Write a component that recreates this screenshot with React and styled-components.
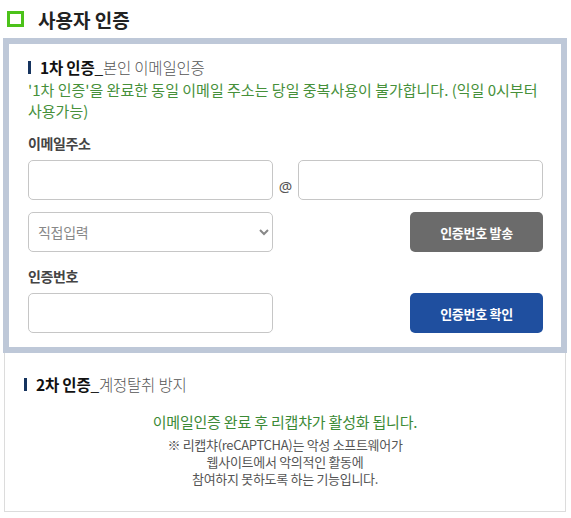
import React from 'react';
import styled, { createGlobalStyle } from 'styled-components';

const GlobalStyle = createGlobalStyle`
    body {
        margin: 0;
        background: #ffffff;
        font-family: "Noto Sans CJK KR", "Noto Sans", sans-serif;
        color: #333;
    }
`;

const App = () => {
    return(
        <Page>
            <GlobalStyle />
            <TitleRow>
                <TitleMark />
                <Title>사용자 인증</Title>
            </TitleRow>
            <Wrapper>
                <FirstBox>
                    <Heading>
                        <Strong>1차 인증</Strong>_<Sub>본인 이메일인증</Sub>
                    </Heading>
                    <Notice>'1차 인증'을 완료한 동일 이메일 주소는 당일 중복사용이 불가합니다. (익일 0시부터 사용가능)</Notice>
                    <Label>이메일주소</Label>
                    <Row>
                        <Input type='text' />
                        <At>@</At>
                        <Input type='text' />
                    </Row>
                    <Row $spaced>
                        <SelectBox>
                            <option>직접입력</option>
                        </SelectBox>
                        <Button $color='#6b6b6b'>인증번호 발송</Button>
                    </Row>
                    <Label $top={14}>인증번호</Label>
                    <Row $spaced>
                        <Input type='text' />
                        <Button $color='#1f4f9f'>인증번호 확인</Button>
                    </Row>
                </FirstBox>
                <SecondBox>
                    <Heading>
                        <Strong>2차 인증</Strong>_<Sub>계정탈취 방지</Sub>
                    </Heading>
                    <CenterNotice>이메일인증 완료 후 리캡챠가 활성화 됩니다.</CenterNotice>
                    <Help>
                        <HelpLine>※ 리캡챠(reCAPTCHA)는 악성 소프트웨어가</HelpLine>
                        <HelpLine>웹사이트에서 악의적인 활동에</HelpLine>
                        <HelpLine>참여하지 못하도록 하는 기능입니다.</HelpLine>
                    </Help>
                </SecondBox>
            </Wrapper>
        </Page>
    );
};

const Page = styled.div`
    width: 571px;
`;
const TitleRow = styled.div`
    height: 38px;
    display: flex;
    align-items: center;
    padding-left: 7px;
    box-sizing: border-box;
`;
const TitleMark = styled.span`
    width: 17px;
    height: 16px;
    box-sizing: border-box;
    border: 3px solid #4cc21a;
`;
const Title = styled.h1`
    margin: 0 0 0 14px;
    font-size: 19px;
    font-weight: 700;
    color: #222;
    letter-spacing: 0;
`;
const Wrapper = styled.div`
    margin-left: 3px;
    width: 564px;
`;
const FirstBox = styled.div`
    border: 6px solid #bec8d8;
    padding: 12px 18px 14px 19px;
`;
const Heading = styled.h2`
    margin: 0;
    display: flex;
    align-items: center;
    font-size: 15.5px;
    line-height: 22px;
    font-weight: 400;
    color: #222;
    letter-spacing: -0.2px;
    &::before {
        content: '';
        width: 3px;
        height: 13px;
        background: #16345f;
        margin: 0 9px 0 0;
    }
`;
const Strong = styled.strong`
    font-weight: 700;
    color: #111;
`;
const Sub = styled.span`
    color: #555;
    font-weight: 300;
`;
const Notice = styled.p`
    margin: 1px 0 0;
    font-size: 15px;
    line-height: 21px;
    color: #46903a;
    letter-spacing: 0;
`;
const Label = styled.div`
    margin-top: ${(props) => props.$top || 12}px;
    font-size: 14px;
    line-height: 20px;
    font-weight: 700;
    color: #444;
    letter-spacing: -0.4px;
`;
const Row = styled.div`
    display: flex;
    align-items: center;
    justify-content: ${(props) => props.$spaced ? 'space-between' : 'flex-start'};
    margin-top: ${(props) => props.$spaced ? 12 : 8}px;
    ${Label} + & {
        margin-top: 7px;
    }
`;
const Input = styled.input`
    width: 245px;
    height: 40px;
    box-sizing: border-box;
    border: 1px solid #c6c6c6;
    border-radius: 5px;
    background: #fff;
    font-family: inherit;
    font-size: 14px;
`;
const At = styled.span`
    width: 25px;
    padding-top: 12px;
    text-align: center;
    font-family: "Noto Sans", sans-serif;
    font-size: 15px;
    color: #555;
`;
const SelectBox = styled.select`
    width: 245px;
    height: 40px;
    box-sizing: border-box;
    border: 1px solid #c6c6c6;
    border-radius: 5px;
    background: #fff;
    padding: 0 6px 0 5px;
    font-family: inherit;
    font-size: 14px;
    color: #888;
    letter-spacing: -0.3px;
`;
const Button = styled.button`
    width: 133px;
    height: 40px;
    border: none;
    border-radius: 5px;
    background: ${(props) => props.$color};
    color: #fff;
    font-family: inherit;
    font-size: 13px;
    font-weight: 700;
    letter-spacing: -0.3px;
`;
const SecondBox = styled.div`
    margin: 0 1px;
    border: 1px solid #dcdcdc;
    border-top: none;
    padding: 20px 19px 24px 19px;
    height: 159px;
    box-sizing: border-box;
`;
const CenterNotice = styled.p`
    margin: 16px 0 0;
    text-align: center;
    font-size: 15px;
    line-height: 22px;
    color: #3c8a36;
    letter-spacing: -0.2px;
`;
const Help = styled.div`
    margin-top: 3px;
    text-align: center;
    font-size: 13px;
    color: #555;
    letter-spacing: -0.3px;
`;
const HelpLine = styled.div`
    height: 17px;
    line-height: 17px;
`;

export default App;
